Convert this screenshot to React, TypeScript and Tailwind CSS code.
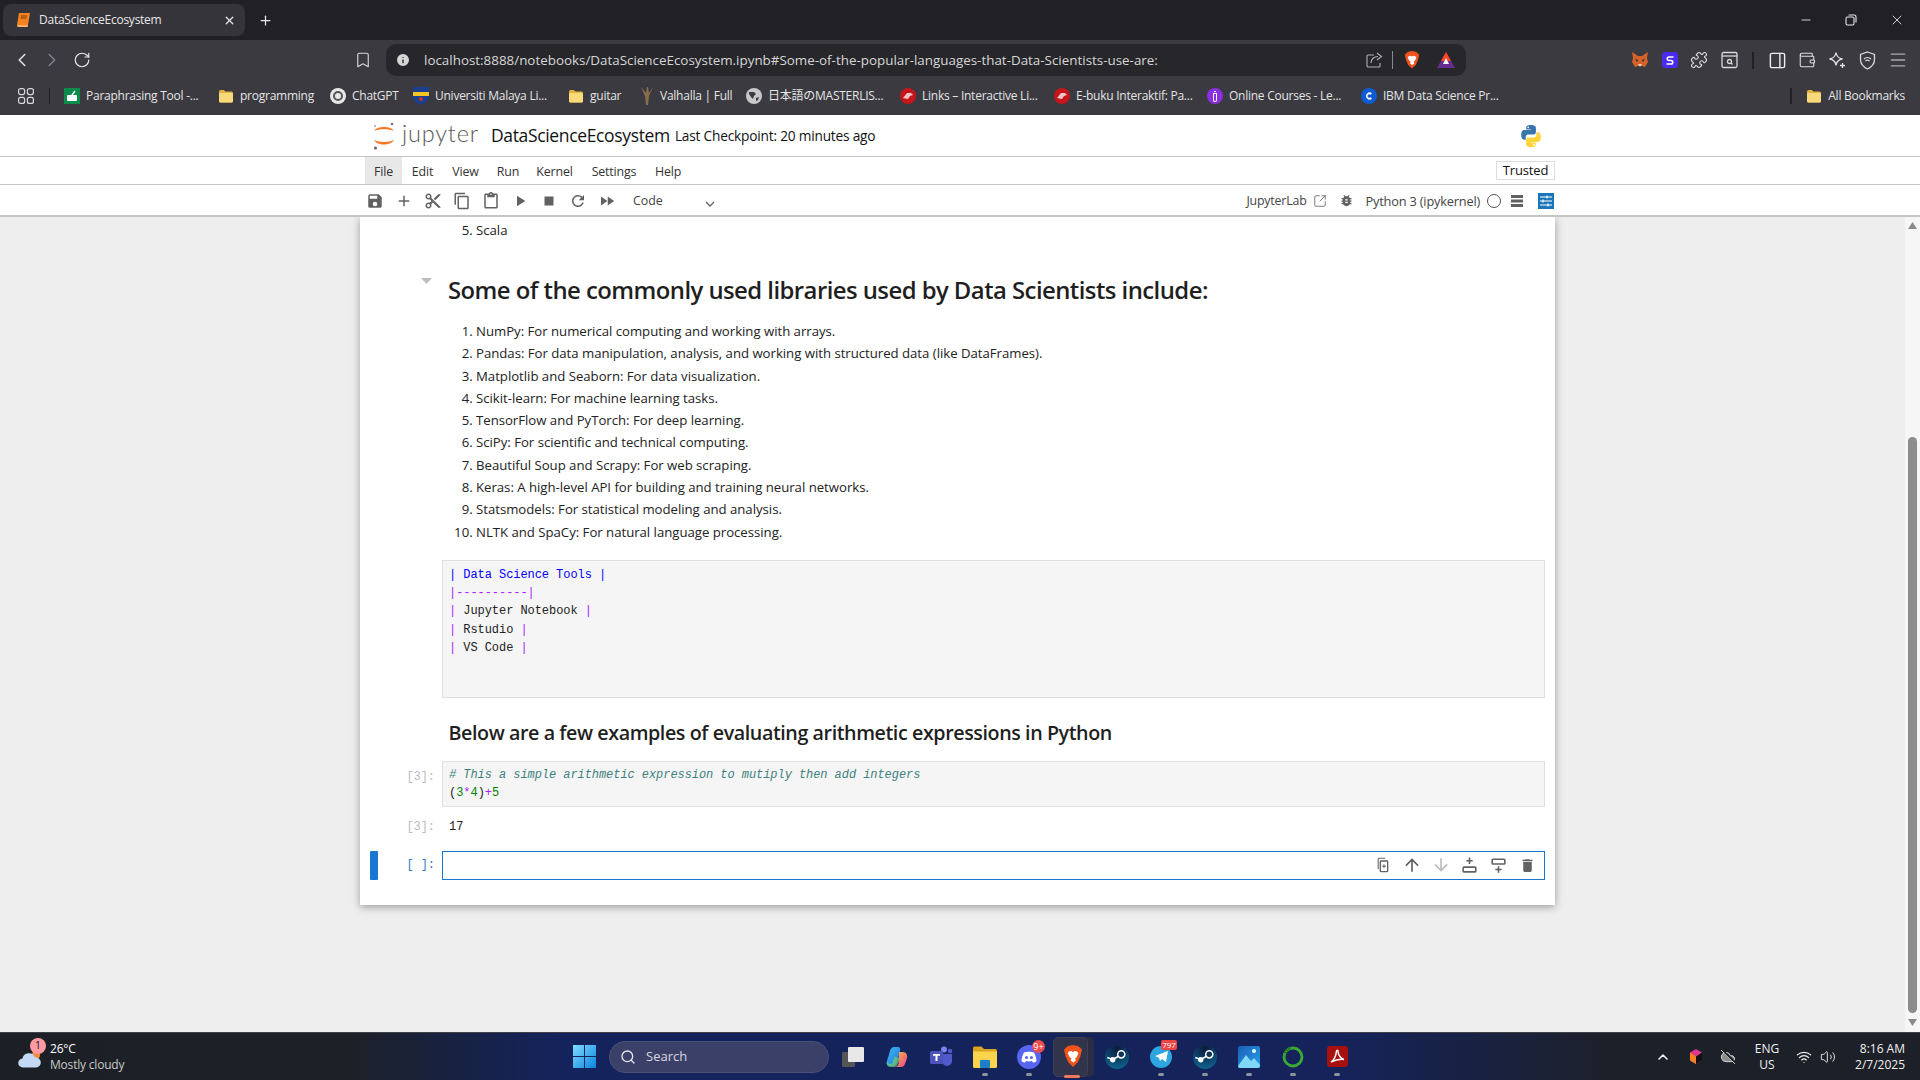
import React from "react";
import { ChevronLeft, ChevronRight, RotateCw, Bookmark, Info, Plus, X, Minus, Search, ChevronUp, Wifi, Volume2, Puzzle, Wallet, PanelRight, Menu, SquareArrowOutUpRight, CloudOff } from "lucide-react";

const M = ({ d, size = 16, color = "#616161", className = "" }: { d: string; size?: number; color?: string; className?: string }) => (
  <svg width={size} height={size} viewBox="0 0 24 24" fill={color} className={className}><path d={d} /></svg>
);
const P = {
  save: "M17 3H5a2 2 0 0 0-2 2v14a2 2 0 0 0 2 2h14c1.1 0 2-.9 2-2V7l-4-4zm-5 16a3 3 0 1 1 0-6 3 3 0 0 1 0 6zm3-10H5V5h10v4z",
  add: "M19 13h-6v6h-2v-6H5v-2h6V5h2v6h6v2z",
  cut: "M9.64 7.64c.23-.5.36-1.05.36-1.64 0-2.21-1.79-4-4-4S2 3.79 2 6s1.79 4 4 4c.59 0 1.14-.13 1.64-.36L10 12l-2.36 2.36C7.14 14.13 6.59 14 6 14c-2.21 0-4 1.79-4 4s1.79 4 4 4 4-1.79 4-4c0-.59-.13-1.14-.36-1.64L12 14l7 7h3v-1L9.64 7.64zM6 8c-1.1 0-2-.89-2-2s.9-2 2-2 2 .89 2 2-.9 2-2 2zm0 12c-1.1 0-2-.89-2-2s.9-2 2-2 2 .89 2 2-.9 2-2 2zm6-7.5c-.28 0-.5-.22-.5-.5s.22-.5.5-.5.5.22.5.5-.22.5-.5.5zM19 3l-6 6 2 2 7-7V3z",
  copy: "M16 1H4c-1.1 0-2 .9-2 2v14h2V3h12V1zm3 4H8c-1.1 0-2 .9-2 2v14c0 1.1.9 2 2 2h11c1.1 0 2-.9 2-2V7c0-1.1-.9-2-2-2zm0 16H8V7h11v14z",
  paste: "M19 2h-4.18C14.4.84 13.3 0 12 0c-1.3 0-2.4.84-2.82 2H5c-1.1 0-2 .9-2 2v16c0 1.1.9 2 2 2h14c1.1 0 2-.9 2-2V4c0-1.1-.9-2-2-2zm-7 0c.55 0 1 .45 1 1s-.45 1-1 1-1-.45-1-1 .45-1 1-1zm7 18H5V4h2v3h10V4h2v16z",
  run: "M8 5v14l11-7z",
  stop: "M6 6h12v12H6z",
  refresh: "M17.65 6.35A7.958 7.958 0 0 0 12 4c-4.42 0-7.99 3.58-7.99 8s3.57 8 7.99 8c3.73 0 6.84-2.55 7.73-6h-2.08A5.99 5.99 0 0 1 12 18c-3.31 0-6-2.69-6-6s2.69-6 6-6c1.66 0 3.14.69 4.22 1.78L13 11h7V4l-2.35 2.35z",
  ffwd: "M4 18l8.5-6L4 6v12zm9-12v12l8.5-6L13 6z",
  bug: "M20 8h-2.81a5.985 5.985 0 0 0-1.82-1.96L17 4.41 15.59 3l-2.17 2.17C12.96 5.06 12.49 5 12 5c-.49 0-.96.06-1.41.17L8.41 3 7 4.41l1.62 1.63C7.88 6.55 7.26 7.22 6.81 8H4v2h2.09c-.05.33-.09.66-.09 1v1H4v2h2v1c0 .34.04.67.09 1H4v2h2.81c1.04 1.79 2.97 3 5.19 3s4.15-1.21 5.19-3H20v-2h-2.09c.05-.33.09-.66.09-1v-1h2v-2h-2v-1c0-.34-.04-.67-.09-1H20V8zm-6 8h-4v-2h4v2zm0-4h-4v-2h4v2z",
  up: "M4 12l1.41 1.41L11 7.83V20h2V7.83l5.58 5.59L20 12l-8-8-8 8z",
  down: "M20 12l-1.41-1.41L13 16.17V4h-2v12.17l-5.58-5.59L4 12l8 8 8-8z",
  del: "M6 19c0 1.1.9 2 2 2h8c1.1 0 2-.9 2-2V7H6v12zM19 4h-3.5l-1-1h-5l-1 1H5v2h14V4z",
  above: "M11 2h2v3h3v2h-3v3h-2V7H8V5h3V2zM5 13h14a2 2 0 0 1 2 2v4a2 2 0 0 1-2 2H5a2 2 0 0 1-2-2v-4a2 2 0 0 1 2-2zm0 2v4h14v-4H5z",
  below: "M5 3h14a2 2 0 0 1 2 2v4a2 2 0 0 1-2 2H5a2 2 0 0 1-2-2V5a2 2 0 0 1 2-2zm0 2v4h14V5H5zm6 8h2v3h3v2h-3v3h-2v-3H8v-2h3v-3z",
  dup: "M15 1H6a2 2 0 0 0-2 2v15h1.6V2.6H15V1zm3 4H9a2 2 0 0 0-2 2v14a2 2 0 0 0 2 2h9a2 2 0 0 0 2-2V7a2 2 0 0 0-2-2zm0 16H9V7h9v14zm-5.2-10h1.4v2.3h2.3v1.4h-2.3V17h-1.4v-2.3h-2.3v-1.4h2.3V11z",
};

const Folder = () => (
  <svg width="16" height="16" viewBox="0 0 16 16"><path d="M1 3.5A1.5 1.5 0 0 1 2.5 2h3.3L7.5 3.5h6A1.5 1.5 0 0 1 15 5v8a1.5 1.5 0 0 1-1.5 1.5h-11A1.5 1.5 0 0 1 1 13z" fill="#e3b341" /><rect x="1" y="5" width="14" height="9.5" rx="1.4" fill="#f8da7a" /></svg>
);
const Dot = ({ c, t, tc = "#fff" }: { c: string; t: string; tc?: string }) => (
  <svg width="16" height="16" viewBox="0 0 16 16"><circle cx="8" cy="8" r="8" fill={c} /><path d={t} fill={tc} /></svg>
);
const Brave = ({ s = 18 }: { s?: number }) => (
  <svg width={s} height={s * 1.15} viewBox="0 0 24 28"><path d="M12 0l6 1.2 2 1.6 3 3-1 4-1 4-3 7-6 6-6-6-3-7-1-4-1-4 3-3 2-1.6z" fill="#f1531d" /><path d="M7 8l3-.6 2 1 2-1 3 .6 1.500 2-2 5-2 1 1 3-3 2.400L9 19l1-3-2-1-2.500-5z" fill="#fff" /></svg>
);

const marks: { w: string; icon: React.ReactNode; t: string }[] = [
  { w: "w-[154px]", icon: <svg width="16" height="16" viewBox="0 0 16 16"><rect width="16" height="16" fill="#0a8a4b" /><rect x="3" y="7" width="10" height="6" rx="1" fill="#fff" /><path d="M8 7l3-4" stroke="#fff" strokeWidth="1.4" /></svg>, t: "Paraphrasing Tool -..." },
  { w: "w-[112px]", icon: <Folder />, t: "programming" },
  { w: "w-[83px]", icon: <Dot c="#e8e8e8" t="M8 3a5 5 0 1 0 0 10A5 5 0 0 0 8 3zm0 2a3 3 0 1 1 0 6 3 3 0 0 1 0-6z" tc="#555" />, t: "ChatGPT" },
  { w: "w-[155px]", icon: <svg width="16" height="18" viewBox="0 0 16 18"><path d="M0 0h16v10c0 4-4 6-8 8-4-2-8-4-8-8z" fill="#1d3f8f" /><rect y="5" width="16" height="4" fill="#f3c623" /><circle cx="8" cy="12" r="2" fill="#c9302c" /></svg>, t: "Universiti Malaya Li..." },
  { w: "w-[72px]", icon: <Folder />, t: "guitar" },
  { w: "w-[106px]", icon: <svg width="14" height="18" viewBox="0 0 14 18"><path d="M1 0l4 9 1 9h2l1-9 4-9-4 6-1-6-1 0-1 6z" fill="#8a6d4a" /></svg>, t: "Valhalla | Full" },
  { w: "w-[154px]", icon: <Dot c="#c8c8c8" t="M3 4h5l2 2-2 2-1 3-2-2-2-3zM10 10l3-1-1 3-2 1z" tc="#3b3b41" />, t: "日本語のMASTERLIS..." },
  { w: "w-[154px]", icon: <Dot c="#c4161c" t="M3 10l4-5h4l2 2-3 1-2 3z" tc="#f3c4c4" />, t: "Links – Interactive Li..." },
  { w: "w-[153px]", icon: <Dot c="#c4161c" t="M3 10l4-5h4l2 2-3 1-2 3z" tc="#f3c4c4" />, t: "E-buku Interaktif: Pa..." },
  { w: "w-[154px]", icon: <Dot c="#8b2fe0" t="M6 5h4v7a2 2 0 0 1-4 0zm1 1v6a1 1 0 0 0 2 0V6zM7 3h2v1H7z" />, t: "Online Courses - Le..." },
  { w: "w-[154px]", icon: <Dot c="#0f5bd5" t="M11 10.500A3.500 3.500 0 1 1 11 5.500L9.500 6.800a1.700 1.700 0 1 0 0 2.400z" />, t: "IBM Data Science Pr..." },
];

function TabStrip() {
  return (
    <div className="h-[40px] bg-[#202025] flex items-center pl-[3px] text-[#e8e8e8] shrink-0 font-['Open_Sans',sans-serif]">
      <div className="w-[242px] h-[32px] bg-[#34343a] rounded-lg flex items-center pl-[13px] pr-[9px]">
        <svg width="15" height="16" viewBox="0 0 15 16"><path d="M3 1h11l-2 12H1z" fill="#f58220" /><path d="M1 13h11l-.3 2H1.600z" fill="#ffb066" /><path d="M5 4h6M4.600 6h6" stroke="#7a3b00" strokeWidth="1" /></svg>
        <span className="ml-[8px] text-[12px] tracking-[-0.25px] flex-1 truncate">DataScienceEcosystem</span>
        <X size={13} strokeWidth={2.4} />
      </div>
      <Plus size={15} className="ml-[13px]" strokeWidth={2} />
      <div className="flex-1" />
      <div className="flex items-center gap-[32px] pr-[15px]">
        <Minus size={14} strokeWidth={1.5} />
        <svg width="12" height="12" viewBox="0 0 12 12" fill="none" stroke="#e8e8e8" strokeWidth="1.100"><rect x="1" y="3" width="8" height="8" rx="1.500" /><path d="M3.500 1h5.500a2 2 0 0 1 2 2v5.500" /></svg>
        <X size={16} strokeWidth={1.3} />
      </div>
    </div>
  );
}

function AddressBar() {
  return (
    <div className="h-[36px] pt-[4px] bg-[#3a3a40] flex items-center text-[#d6d6d6] shrink-0">
      <div className="flex items-center w-[386px] pl-[11px] shrink-0">
        <ChevronLeft size={22} strokeWidth={1.6} className="text-[#e6e6e6]" />
        <ChevronRight size={22} strokeWidth={1.6} className="ml-[8px] text-[#80808a]" />
        <RotateCw size={18} strokeWidth={1.6} className="ml-[10px] text-[#e6e6e6]" />
        <Bookmark size={18} strokeWidth={1.5} className="ml-[263px] text-[#d8d8d8]" />
      </div>
      <div className="h-[32px] w-[1080px] bg-[#26262b] rounded-[10px] flex items-center pl-[9px] pr-[11px] shrink-0">
        <Info size={16} fill="#d6d6d6" stroke="#26262b" strokeWidth={2} />
        <span className="ml-[13px] text-[13.4px] flex-1 font-['Open_Sans',sans-serif] truncate">localhost:8888/notebooks/DataScienceEcosystem.ipynb#Some-of-the-popular-languages-that-Data-Scientists-use-are:</span>
        <svg width="17" height="16" viewBox="0 0 17 16" fill="none" stroke="#b0b0b0" strokeWidth="1.100"><path d="M8 3H2a1 1 0 0 0-1 1v10a1 1 0 0 0 1 1h11a1 1 0 0 0 1-1v-3" /><path d="M5 11c0-4 3-6.500 7-6.500M11 1l4.500 3.500L11 8" /></svg>
        <div className="w-px h-[18px] bg-[#8a8a8a] ml-[9px] mr-[11px]" />
        <Brave s={16} />
        <svg width="18" height="16" viewBox="0 0 18 16" className="ml-[17px]"><path d="M9 0l9 16H0z" fill="#662d91" /><path d="M9 0l5 9H4z" fill="#ff4724" /><path d="M9 6l3 6H6z" fill="#fff" /></svg>
      </div>
      <div className="flex items-center ml-[165px] text-[#e0e0e0]">
        <svg width="18" height="18" viewBox="0 0 18 18"><path d="M1 1l6 4h4l6-4-1 6 1 4-3 5-3-1H7l-3 1-3-5 1-4z" fill="#d5622a" /><path d="M4 8l3 1-1 2zM14 8l-3 1 1 2z" fill="#2b2b2b" /><path d="M7 13h4l-2 3z" fill="#e8d3bf" /></svg>
        <div className="ml-[13px] w-[16px] h-[16px] rounded-[3px] bg-[#4b2bf0] flex items-center justify-center">
          <svg width="10" height="10" viewBox="0 0 10 10" fill="none" stroke="#fff" strokeWidth="1.600"><path d="M8.500 2H4a1.700 1.700 0 0 0 0 3.500h2A1.700 1.700 0 0 1 6 9H1.500" /></svg>
        </div>
        <Puzzle size={18} strokeWidth={1.5} className="ml-[12px]" />
        <svg width="17" height="18" viewBox="0 0 17 18" fill="none" stroke="#d8d8d8" strokeWidth="1.300" className="ml-[13px]"><rect x="1" y="1.500" width="15" height="15" rx="1.500" /><path d="M1 5h15" /><circle cx="8.500" cy="10.500" r="2" /><path d="M10 12l1.500 1.500" /></svg>
        <div className="w-[2px] h-[17px] bg-[#202025] ml-[14px]" />
        <PanelRight size={19} strokeWidth={1.8} className="ml-[14px] text-[#eee]" />
        <Wallet size={18} strokeWidth={1.4} className="ml-[11px]" />
        <svg width="18" height="18" viewBox="0 0 18 18" fill="none" stroke="#e0e0e0" strokeWidth="1.300" className="ml-[12px]"><path d="M8 1.500c.6 4 2.500 6 6.500 6.500-4 .5-6 2.500-6.500 6.500-.5-4-2.500-6-6.500-6.500 4-.5 5.900-2.500 6.500-6.500z" /><path d="M14.500 12v5M12 14.500h5" /></svg>
        <svg width="17" height="19" viewBox="0 0 17 19" fill="none" stroke="#d8d8d8" strokeWidth="1.300" className="ml-[13px]"><path d="M8.500 1l7 2.500v5c0 4.500-3 7.500-7 9.500-4-2-7-5-7-9.500v-5z" /><path d="M5 8a5 5 0 0 1 7 0M6.500 10a3 3 0 0 1 4 0" /></svg>
        <Menu size={20} strokeWidth={1.6} className="ml-[12px] text-[#aaa]" />
      </div>
    </div>
  );
}

function Bookmarks() {
  return (
    <div className="h-[39px] bg-[#3a3a40] flex items-center text-[#e4e4e4] text-[12px] font-['Open_Sans','Noto_Sans_CJK_JP',sans-serif] tracking-[-0.25px] shrink-0">
      <div className="w-[64px] pl-[18px] flex items-center shrink-0">
        <svg width="16" height="16" viewBox="0 0 16 16" fill="none" stroke="#d8d8d8" strokeWidth="1.200"><rect x=".6" y=".6" width="6" height="6" rx="2" /><rect x="9.400" y=".6" width="6" height="6" rx="2" /><rect x=".6" y="9.400" width="6" height="6" rx="2" /><rect x="9.400" y="9.400" width="6" height="6" rx="2" /></svg>
        <div className="w-px h-[16px] bg-[#202025] ml-[15px]" />
      </div>
      {marks.map((m) => (
        <div key={m.t} className={`${m.w} flex items-center gap-[6px] shrink-0 whitespace-nowrap`}>
          <span className="shrink-0 flex">{m.icon}</span>
          <span>{m.t}</span>
        </div>
      ))}
      <div className="flex-1" />
      <div className="w-[2px] h-[16px] bg-[#202025] mr-[14px]" />
      <Folder />
      <span className="ml-[6px] mr-[15px] whitespace-nowrap">All Bookmarks</span>
    </div>
  );
}

const Py = () => (
  <svg width="24" height="26" viewBox="0 0 24 24">
    <path d="M11.900 1C7 1 7.300 3.100 7.300 3.100v2.300h4.700v.7H5.400S2.200 5.800 2.200 10.800s2.800 4.900 2.800 4.900h1.700v-2.400s-.1-2.800 2.800-2.800h4.700s2.700 0 2.700-2.600V3.600S17 1 11.900 1zM9.300 2.500a.85.85 0 1 1 0 1.700.85.85 0 0 1 0-1.700z" fill="#3776ab" />
    <path d="M12.100 23c4.900 0 4.600-2.100 4.600-2.100v-2.300H12v-.7h6.600s3.200.3 3.200-4.700-2.800-4.900-2.800-4.900h-1.700v2.400s.1 2.800-2.800 2.800H9.800s-2.700 0-2.700 2.600v4.300S7 23 12.100 23zm2.600-1.500a.85.85 0 1 1 0-1.700.85.85 0 0 1 0 1.700z" fill="#ffd43b" />
  </svg>
);

const JupLogo = () => (
  <svg width="24" height="30" viewBox="0 0 24 30">
    <path d="M2 10C5 4.500 19 4.500 22 10 18 7.500 6 7.500 2 10z" fill="#f37726" />
    <path d="M2 19C6 21.500 18 21.500 22 19 19 25 5 25 2 19z" fill="#f37726" />
    <circle cx="20" cy="3" r="1.300" fill="#767677" />
    <circle cx="3" cy="5" r=".9" fill="#989798" />
    <circle cx="3.500" cy="27" r="1.500" fill="#616262" />
  </svg>
);

function JupyterHeader() {
  const F = "font-['Open_Sans',sans-serif]";
  return (
    <div className={`shrink-0 bg-white text-[#222] ${F}`}>
      <div className="h-[42px] border-b border-[#c4c4c4] flex items-center pl-[372px]">
        <JupLogo />
        <span className="ml-[6px] text-[23.500px] font-light text-[#5a5a5a] font-['Lato',sans-serif] tracking-[0.8px] leading-none -mt-[3px] w-[83px]">jupyter</span>
        <span className="ml-[6px] text-[17.500px] text-[#111] tracking-[-0.35px]">DataScienceEcosystem</span>
        <span className="ml-[5px] mt-[1px] text-[13.700px] text-[#111] tracking-[-0.2px]">Last Checkpoint: 20 minutes ago</span>
        <div className="ml-auto mr-[377px] flex"><Py /></div>
      </div>
      <div className="h-[28px] border-b border-[#c4c4c4] flex items-center pl-[365px] text-[12.400px] text-[#333] tracking-[-0.15px]">
        <span className="h-full w-[37px] pt-[3px] bg-[#e8e8e8] flex items-center justify-center">File</span>
        <span className="w-[41px] pt-[3px] text-center">Edit</span>
        <span className="w-[45px] pt-[3px] text-center">View</span>
        <span className="w-[40px] pt-[3px] text-center">Run</span>
        <span className="w-[53px] pt-[3px] text-center">Kernel</span>
        <span className="w-[66px] pt-[3px] text-center">Settings</span>
        <span className="w-[42px] pt-[3px] text-center">Help</span>
        <div className="flex-1" />
        <span className="w-[59px] h-[19px] border border-[#ddd] flex items-center justify-center text-[13px] text-[#111] mr-[365px]">Trusted</span>
      </div>
      <div className="h-[32px] border-b-2 border-[#c4c4c4] flex items-center pl-[366px] pt-[1px] text-[12.400px] text-[#444]">
        {[P.save, P.add, P.cut, P.copy, P.paste, P.run, P.stop, P.refresh, P.ffwd].map((d) => (
          <span key={d} className="w-[29px] flex justify-start"><M d={d} size={18} /></span>
        ))}
        <span className="ml-[6px] mt-[2px] w-[74px]">Code</span>
        <svg width="10" height="6" viewBox="0 0 10 6" fill="none" stroke="#666" strokeWidth="1.300" className="mt-[6px] -ml-[2px]"><path d="M1 1l4 4 4-4" /></svg>
        <div className="flex-1" />
        <span className="mt-[2px] tracking-[-0.2px]">JupyterLab</span>
        <SquareArrowOutUpRight size={14} strokeWidth={1.3} className="ml-[6px] text-[#555]" />
        <span className="ml-[12px]"><M d={P.bug} size={15} /></span>
        <span className="ml-[12px] mt-[2px] text-[12.800px] tracking-[-0.2px]">Python 3 (ipykernel)</span>
        <span className="ml-[7px] w-[14px] h-[14px] rounded-full border border-[#555]" />
        <svg width="14" height="12" viewBox="0 0 14 12" className="ml-[9px]"><path d="M1 0h12v3H1zM1 4.500h12v3H1zM1 9h12v3H1z" fill="#616161" /></svg>
        <span className="ml-[14px] mr-[366px] w-[16px] h-[16px] bg-[#1976b8] flex items-center justify-center">
          <svg width="14" height="12" viewBox="0 0 14 12" stroke="#fff" strokeWidth="1.200"><path d="M1 2h12M1 6h12M1 10h12" /><path d="M8 .5v3M4 4.500v3M9 8.500v3" /></svg>
        </span>
      </div>
    </div>
  );
}

const ListItem = ({ children }: { children: React.ReactNode }) => <li className="h-[22.300px] leading-[22.300px]">{children}</li>;
const mono = "font-['Liberation_Mono',monospace] text-[12px] tracking-[-0.06px]";

function Notebook() {
  return (
    <div className="flex-1 min-h-0 bg-[#eeeeee] flex overflow-hidden">
      <div className="flex-1 min-w-0 pl-[360px]">
        <div className="w-[1195px] h-[688px] bg-white shadow-[0_2px_8px_rgba(0,0,0,0.35)] font-['Open_Sans',sans-serif] text-[13.200px] text-[#222] tracking-[-0.02px] flex flex-col">
          <ol start={5} className="list-decimal ml-[88px] pl-[28px] mt-[2px] leading-[22px]"><li>Scala</li></ol>
          <div className="flex mt-[29px] h-[40px] items-center">
            <div className="w-[72px] shrink-0 flex justify-end -mt-[18px]">
              <svg width="11" height="6" viewBox="0 0 11 6"><path d="M0 0h11L5.500 6z" fill="#bdbdbd" /></svg>
            </div>
            <h2 className="ml-[16px] text-[23.900px] font-semibold tracking-[-0.55px] leading-none text-[#1f1f1f] whitespace-nowrap">Some of the commonly used libraries used by Data Scientists include:</h2>
          </div>
          <ol className="list-decimal ml-[88px] pl-[28px] mt-[10px]">
            <ListItem>NumPy: For numerical computing and working with arrays.</ListItem>
            <ListItem>Pandas: For data manipulation, analysis, and working with structured data (like DataFrames).</ListItem>
            <ListItem>Matplotlib and Seaborn: For data visualization.</ListItem>
            <ListItem>Scikit-learn: For machine learning tasks.</ListItem>
            <ListItem>TensorFlow and PyTorch: For deep learning.</ListItem>
            <ListItem>SciPy: For scientific and technical computing.</ListItem>
            <ListItem>Beautiful Soup and Scrapy: For web scraping.</ListItem>
            <ListItem>Keras: A high-level API for building and training neural networks.</ListItem>
            <ListItem>Statsmodels: For statistical modeling and analysis.</ListItem>
            <ListItem>NLTK and SpaCy: For natural language processing.</ListItem>
          </ol>
          <div className={`ml-[82px] w-[1103px] h-[138px] mt-[17px] shrink-0 bg-[#f5f5f5] border border-[#e0e0e0] pl-[6px] pt-[5px] ${mono} leading-[18.200px] text-[#222]`}>
            <div className="text-[#0000ff] whitespace-pre">| Data Science Tools |</div>
            <div className="text-[#aa22ff] whitespace-pre">|----------|</div>
            <div className="whitespace-pre"><span className="text-[#aa22ff]">|</span> Jupyter Notebook <span className="text-[#aa22ff]">|</span></div>
            <div className="whitespace-pre"><span className="text-[#aa22ff]">|</span> Rstudio <span className="text-[#aa22ff]">|</span></div>
            <div className="whitespace-pre"><span className="text-[#aa22ff]">|</span> VS Code <span className="text-[#aa22ff]">|</span></div>
          </div>
          <h3 className="ml-[88.500px] mt-[21px] text-[19.700px] font-semibold tracking-[-0.42px] leading-[28px] text-[#1f1f1f] whitespace-nowrap">Below are a few examples of evaluating arithmetic expressions in Python</h3>
          <div className="flex mt-[14px]">
            <div className={`w-[82px] pr-[7px] pt-[7px] text-right shrink-0 text-[#bdbdbd] ${mono}`}>[3]:</div>
            <div className={`w-[1103px] h-[46px] bg-[#f5f5f5] border border-[#e0e0e0] pl-[6px] pt-[4px] ${mono} leading-[18px] text-[#222]`}>
              <div className="italic text-[#408080] whitespace-pre"># This a simple arithmetic expression to mutiply then add integers</div>
              <div className="whitespace-pre">(<span className="text-[#008000]">3</span><span className="text-[#aa22ff]">*</span><span className="text-[#008000]">4</span>)<span className="text-[#aa22ff]">+</span><span className="text-[#008000]">5</span></div>
            </div>
          </div>
          <div className={`flex mt-[11px] ${mono} leading-[18px]`}>
            <div className="w-[82px] pr-[7px] text-right shrink-0 text-[#bdbdbd]">[3]:</div>
            <div className="pl-[7px] text-[#222]">17</div>
          </div>
          <div className="flex mt-[15px] h-[29px] relative">
            <div className="absolute left-[10px] top-0 w-[8px] h-[29px] bg-[#1976d2] rounded-[1px]" />
            <div className={`w-[82px] pr-[7px] text-right shrink-0 text-[#307fc1] ${mono} leading-[29px]`}>[ ]:</div>
            <div className="w-[1103px] border border-[#1976d2] flex items-center justify-end pr-[2px]">
              {([[P.dup, "#616161", 16], [P.up, "#616161", 20], [P.down, "#bdbdbd", 20], [P.above, "#616161", 19], [P.below, "#616161", 19], [P.del, "#616161", 17]] as [string, string, number][]).map(([d, c, s]) => (
                <span key={d} className="w-[29px] flex justify-center"><M d={d} color={c} size={s} /></span>
              ))}
            </div>
          </div>
        </div>
      </div>
      <div className="w-[15px] shrink-0 bg-[#f6f6f6] flex flex-col items-center">
        <svg width="9" height="7" viewBox="0 0 9 7" className="mt-[5px]"><path d="M4.500 0L9 7H0z" fill="#8a8a8a" /></svg>
        <div className="h-[208px] shrink-0" />
        <div className="w-[9px] flex-1 bg-[#8c8c8c] rounded-full" />
        <svg width="9" height="7" viewBox="0 0 9 7" className="my-[6px]"><path d="M4.500 7L9 0H0z" fill="#8a8a8a" /></svg>
      </div>
    </div>
  );
}

const TIcon = ({ children, dot }: { children: React.ReactNode; dot?: boolean }) => (
  <div className="w-[44px] h-[48px] flex items-center justify-center relative shrink-0">
    {children}
    {dot && <span className="absolute bottom-[5px] left-[19px] w-[6px] h-[3px] rounded-full bg-[#8d929c]" />}
  </div>
);

const Steam = () => (
  <div className="w-[24px] h-[24px] rounded-full bg-[radial-gradient(circle_at_50%_15%,#0b1a3a,#0f6f9c)] flex items-center justify-center">
    <svg width="20" height="15" viewBox="0 0 18 14"><circle cx="13" cy="5" r="3.300" fill="none" stroke="#fff" strokeWidth="1.400" /><circle cx="5" cy="10" r="2.500" fill="#fff" /><path d="M0 8l5 2 5-3" stroke="#fff" strokeWidth="1.500" fill="none" /></svg>
  </div>
);

function Taskbar() {
  return (
    <div className="h-[48px] shrink-0 border-t border-[#3e4147] bg-[linear-gradient(90deg,#1c2026_0%,#1c2027_18%,#14235c_29%,#15235a_70%,#1c2029_84%,#1d2028_100%)] flex items-center font-['Open_Sans',sans-serif] text-white">
      <div className="w-[562px] h-full flex items-center pl-[18px] shrink-0">
        <div className="relative w-[32px] h-[32px] shrink-0">
          <svg width="25" height="17" viewBox="0 0 25 17" className="absolute left-0 top-[10px]"><circle cx="18" cy="4" r="4" fill="#f48a3c" /><path d="M5 16.500a4.500 4.500 0 0 1-.5-9 6.500 6.500 0 0 1 12.500-1 5 5 0 0 1 1.500 10z" fill="#c4d9f5" /></svg>
          <span className="absolute left-[12px] -top-[3px] w-[16px] h-[16px] rounded-full bg-[#ff9aa2] text-[#222] text-[11px] flex items-center justify-center">1</span>
        </div>
        <div className="leading-[16px] tracking-[-0.2px] text-[12px]">
          <div>26°C</div>
          <div className="text-[#c8c8c8]">Mostly cloudy</div>
        </div>
      </div>
      <TIcon>
        <svg width="23" height="23" viewBox="0 0 23 23"><defs><linearGradient id="w" x1="0" y1="0" x2="1" y2="1"><stop offset="0" stopColor="#7fdcff" /><stop offset="1" stopColor="#0a84e0" /></linearGradient></defs><path d="M0 0h11v11H0zM12 0h11v11H12zM0 12h11v11H0zM12 12h11v11H12z" fill="url(#w)" /></svg>
      </TIcon>
      <div className="ml-[3px] w-[220px] h-[32px] rounded-full bg-[#3a4068] border border-[#4a507a] flex items-center pl-[10px] text-[13px] text-[#d8d8e0] shrink-0">
        <Search size={16} strokeWidth={2} className="text-[#e8e8f0]" />
        <span className="ml-[10px]">Search</span>
      </div>
      <div className="ml-[2px] flex">
        <TIcon>
          <div className="relative w-[22px] h-[20px]"><div className="absolute left-0 bottom-0 w-[13px] h-[15px] bg-[#555] rounded-[1px]" /><div className="absolute right-0 top-0 w-[16px] h-[15px] bg-[#e8e8e8] rounded-[1px]" /></div>
        </TIcon>
        <TIcon>
          <svg width="22" height="22" viewBox="0 0 22 22"><defs><linearGradient id="c1" x1="0" y1="0" x2="1" y2="1"><stop offset="0" stopColor="#35c1f1" /><stop offset="1" stopColor="#2a6ce0" /></linearGradient><linearGradient id="c2" x1="0" y1="0" x2="1" y2="1"><stop offset="0" stopColor="#f6b93b" /><stop offset="1" stopColor="#e84393" /></linearGradient></defs><path d="M8 1h4c2 0 2.500 2 2 4l-3 11c-.6 2-2 4-4 4H4c-2.500 0-4-2-3-5L4 5c.6-2 2-4 4-4z" fill="url(#c1)" /><path d="M13 6h4c3 0 5 3 4 6l-2 6c-.6 2-2 3-4 3h-6c2 0 3-2 3.500-3z" fill="url(#c2)" /><path d="M1 15c1 3 3 3 4 3s1.500-1 2-3l2-6c-1 3 5 3 5 3l-2 5c-1 3-2 4-4 4H5c-3 0-5-2-4-6z" fill="#6fce6f" opacity=".7" /></svg>
        </TIcon>
        <TIcon>
          <svg width="24" height="22" viewBox="0 0 24 22"><circle cx="15" cy="3.500" r="3" fill="#7b83eb" /><circle cx="21" cy="5" r="2.300" fill="#5059c9" /><path d="M11 8h12v7a5 5 0 0 1-10 0z" fill="#5059c9" /><rect x="1" y="5" width="13" height="13" rx="1.500" fill="#4b53bc" /><path d="M4 8h7v1.800H8.500V15h-2V9.800H4z" fill="#fff" /></svg>
        </TIcon>
        <TIcon dot>
          <svg width="24" height="22" viewBox="0 0 24 22"><path d="M0 2a1.500 1.500 0 0 1 1.500-1.500h7L11 3h11.500A1.500 1.500 0 0 1 24 4.500V8H0z" fill="#d9a520" /><path d="M0 5.500h24v15a1.500 1.500 0 0 1-1.500 1.500h-21A1.500 1.500 0 0 1 0 20.500z" fill="#fcd34d" /><rect x="7" y="14" width="10" height="8" rx="1" fill="#1a7fc8" /></svg>
        </TIcon>
        <TIcon dot>
          <div className="relative w-[24px] h-[24px] rounded-full bg-[#5865f2] flex items-center justify-center">
            <svg width="16" height="12" viewBox="0 0 16 12"><path d="M3 1.500C5 .5 11 .5 13 1.500c1.500 2.500 2.300 5.500 2.500 8.500-1 1-2.500 1.500-3.500 1.500l-1-1.500c-2 .6-4 .6-6 0L4 11.500C3 11.500 1.500 11 .5 10 .7 7 1.500 4 3 1.500z" fill="#fff" /><circle cx="5.500" cy="6.500" r="1.500" fill="#5865f2" /><circle cx="10.500" cy="6.500" r="1.500" fill="#5865f2" /></svg>
            <span className="absolute -top-[5px] -right-[4px] w-[13px] h-[13px] rounded-full bg-[#ef4b4b] text-[9px] flex items-center justify-center leading-none">9+</span>
          </div>
        </TIcon>
        <div className="w-[44px] h-[48px] relative flex items-center justify-center shrink-0">
          <div className="absolute left-[4px] top-[4px] w-[39px] h-[40px] rounded-[5px] bg-[#2a2d44]" />
          <div className="absolute left-[2px] top-[4px] w-[35px] h-[40px] rounded-[5px] bg-[#31344a] border border-[#3d4056]" />
          <div className="relative"><Brave s={20} /></div>
          <span className="absolute bottom-[3px] left-[13px] w-[16px] h-[3px] rounded-full bg-[#f07a5c]" />
        </div>
        <TIcon><Steam /></TIcon>
        <TIcon dot>
          <div className="relative w-[22px] h-[22px] rounded-full bg-[#2ca5e0] flex items-center justify-center">
            <svg width="13" height="11" viewBox="0 0 13 11"><path d="M0 5l13-5-2 11-4-3-2 2-1-3z" fill="#fff" /></svg>
            <span className="absolute -top-[6px] left-[11px] w-[16px] h-[10px] rounded-[2px] bg-[#ef4444] text-[8px] flex items-center justify-center leading-none">797</span>
          </div>
        </TIcon>
        <TIcon dot><Steam /></TIcon>
        <TIcon dot>
          <svg width="22" height="22" viewBox="0 0 22 22"><defs><linearGradient id="ph" x1="0" y1="0" x2="1" y2="1"><stop offset="0" stopColor="#1a5fb8" /><stop offset="1" stopColor="#2a9fe8" /></linearGradient></defs><rect width="22" height="22" rx="2" fill="url(#ph)" /><path d="M0 20l8-11 5 6 3-3 6 7v1a2 2 0 0 1-2 2H2a2 2 0 0 1-2-2z" fill="#7fd8f8" /><circle cx="16" cy="5" r="2" fill="#dff" /></svg>
        </TIcon>
        <TIcon dot>
          <svg width="22" height="22" viewBox="0 0 22 22" fill="none"><circle cx="11" cy="11" r="9" stroke="#3aaa35" strokeWidth="2.800" /><path d="M3 7a9 9 0 0 1 6-5" stroke="#1f6b1f" strokeWidth="2.800" strokeDasharray="1.500 1" /></svg>
        </TIcon>
        <TIcon dot>
          <div className="w-[21px] h-[21px] rounded-[3px] bg-[#a80f0f] flex items-center justify-center">
            <svg width="15" height="15" viewBox="0 0 15 15" fill="none" stroke="#fff" strokeWidth="1.500"><path d="M1 13c3-2 5-6 5.500-11 0-1 1.500-1 1.500 0 0 4 3 8 6 8.500-4-.5-9 .5-13 2.500z" /></svg>
          </div>
        </TIcon>
      </div>
      <div className="flex-1" />
      <div className="flex items-center text-[#f0f0f0]">
        <ChevronUp size={16} strokeWidth={2.4} />
        <svg width="14" height="15" viewBox="0 0 14 15" className="ml-[18px]"><path d="M7 0l6 3.500v8L7 15l-6-3.500v-8z" fill="#e0368c" /><path d="M1 3.500v8L7 15V7.500z" fill="#f58220" /><path d="M7 7.500V15l6-3.500v-8z" fill="#111" /></svg>
        <CloudOff size={16} strokeWidth={1.5} fill="#8d8d8d" className="ml-[17px] text-[#d0d0d0]" />
        <div className="ml-[17px] w-[28px] text-center text-[12px] leading-[16px]">ENG<br />US</div>
        <Wifi size={16} strokeWidth={1.8} className="ml-[15px]" />
        <Volume2 size={16} strokeWidth={1.4} className="ml-[8px]" />
        <div className="ml-[13px] mr-[15px] w-[56px] text-right text-[12px] leading-[16px] whitespace-nowrap">8:16 AM<br />2/7/2025</div>
      </div>
    </div>
  );
}

export default function App() {
  return (
    <div className="w-[1920px] h-[1080px] flex flex-col overflow-hidden bg-white">
      <TabStrip />
      <AddressBar />
      <Bookmarks />
      <JupyterHeader />
      <Notebook />
      <Taskbar />
    </div>
  );
}
